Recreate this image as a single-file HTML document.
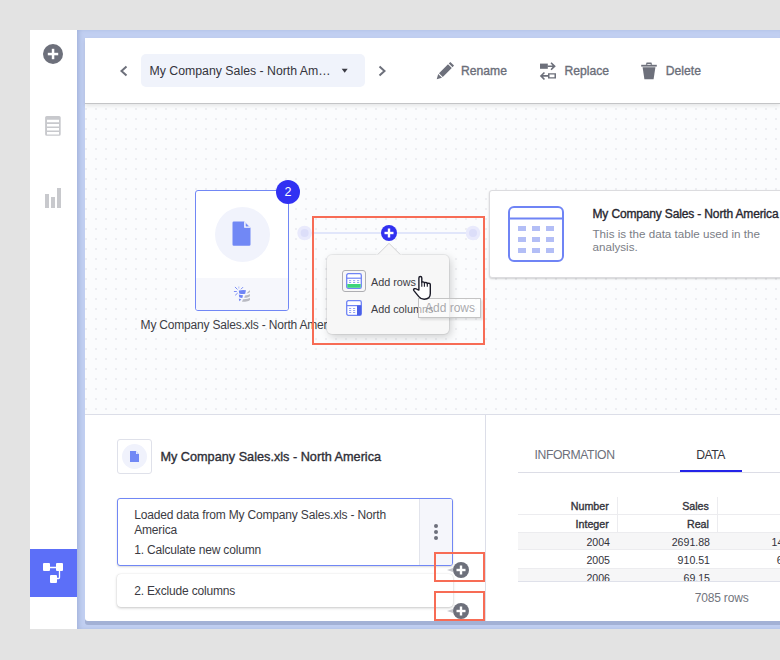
<!DOCTYPE html>
<html><head><meta charset="utf-8">
<style>
*{box-sizing:border-box;margin:0;padding:0}
html,body{width:780px;height:660px;overflow:hidden;background:#e3e3e3;font-family:"Liberation Sans",sans-serif;position:relative}
.a{position:absolute}
.t{position:absolute;white-space:nowrap;line-height:1}
#side{left:30px;top:30px;width:47px;height:599px;background:#fff}
#frame{left:77px;top:30px;width:703px;height:599px;background:#c1cff1;box-shadow:inset 3px 0 4px -1px rgba(80,100,160,.25)}
#card{left:85px;top:38px;width:695px;height:583px;background:#fff;border-radius:3px 0 0 3px;box-shadow:0 4px 0 #a3b1d5}
#header{left:85px;top:38px;width:695px;height:66px;background:#fff;border-bottom:1px solid #c3c4c6;box-shadow:0 2px 4px rgba(0,0,0,.09)}
#canvas{left:85px;top:104px;width:695px;height:310px}
#hline{left:85px;top:414px;width:695px;height:1px;background:#dcdee8}
#vline{left:485px;top:415px;width:1px;height:206px;background:#dcdee8}
.hdr{font-size:12.15px;color:#6b6e79;-webkit-text-stroke:0.35px #6b6e79}
.med{-webkit-text-stroke:0.35px currentColor}
</style></head><body>
<div class="a" id="side"></div>
<div class="a" id="frame"></div>
<div class="a" id="card"></div>
<svg class="a" id="canvas" width="695" height="310">
  <defs><pattern id="dots" x="0" y="4" width="10" height="10" patternUnits="userSpaceOnUse"><rect x="0" y="0" width="2" height="2" fill="#edeef2"/></pattern></defs>
  <rect width="695" height="310" fill="#fbfcfd"/>
  <rect width="695" height="310" fill="url(#dots)"/>
</svg>
<div class="a" id="header"></div>
<div class="a" id="hline"></div>
<div class="a" id="vline"></div>

<!-- sidebar icons -->
<svg class="a" style="left:30px;top:30px" width="47" height="200">
  <circle cx="23" cy="24" r="10" fill="#6d707b"/>
  <rect x="17.8" y="22.8" width="10.4" height="2.5" fill="#fff"/>
  <rect x="21.8" y="18.8" width="2.5" height="10.4" fill="#fff"/>
  <g fill="#c8c9cd">
   <path d="M16.7,86 h12.4 a1.6,1.6 0 0 1 1.6,1.6 v16.6 a1.6,1.6 0 0 1 -1.6,1.6 h-12.4 a1.6,1.6 0 0 1 -1.6,-1.6 v-16.6 a1.6,1.6 0 0 1 1.6,-1.6z M17,89.8 v2.4 h12 v-2.4z M17,94 v2.4 h12 v-2.4z M17,98 v2.4 h12 v-2.4z M17,102 v2.4 h12 v-2.4z" fill-rule="evenodd"/>
   <rect x="15" y="164" width="4" height="14"/>
   <rect x="21" y="167" width="4" height="11"/>
   <rect x="27" y="158" width="4" height="20"/>
  </g>
</svg>
<div class="a" style="left:30px;top:549px;width:47px;height:48px;background:#5c6ff8"></div>
<svg class="a" style="left:30px;top:549px" width="47" height="48">
  <g fill="#fff">
   <rect x="13" y="14" width="7" height="8" rx="1"/>
   <rect x="26" y="14" width="7" height="8" rx="1"/>
   <rect x="20" y="26" width="7" height="8" rx="1"/>
  </g>
  <path d="M20,18.5 H26 M29.5,22 V28.5 Q29.5,29.5 28.5,29.5 H27" stroke="#fff" stroke-width="1.3" fill="none"/>
</svg>

<!-- header -->
<svg class="a" style="left:115px;top:60px" width="20" height="20">
  <path d="M11.5,6.5 L6.5,11 L11.5,15.5" stroke="#6d707b" stroke-width="2" fill="none"/>
</svg>
<div class="a" style="left:141px;top:54px;width:224px;height:33px;background:#f0f3fb;border-radius:5px"></div>
<div class="t" style="left:149.5px;top:64.7px;font-size:12.3px;color:#34343c">My Company Sales - North Am…</div>
<svg class="a" style="left:338px;top:64px" width="14" height="14"><path d="M3.7,4.8 H9.7 L6.7,8.7z" fill="#3b3b44"/></svg>
<svg class="a" style="left:372px;top:60px" width="20" height="20">
  <path d="M7.5,6.5 L12.5,11 L7.5,15.5" stroke="#6d707b" stroke-width="2" fill="none"/>
</svg>

<svg class="a" style="left:436px;top:62px" width="18" height="18" viewBox="0 0 18 18">
  <path d="M0.7,17.2 L2.2,12 L6,15.7z M3,11.2 L12,2.2 L15.8,6 L6.8,15z M12.8,1.4 L14.3,0 L18,3.6 L16.6,5.2z" fill="#6d707b"/>
</svg>
<div class="t hdr" style="left:461px;top:64.6px">Rename</div>

<svg class="a" style="left:539px;top:62px" width="18" height="18" viewBox="0 0 18 18">
  <g fill="#6d707b">
   <rect x="1" y="1.6" width="7.8" height="5.2"/>
   <path d="M8.5,3.4 H13.5 L11.5,1.2 L12.6,0.2 L16.8,4.2 L12.6,8.2 L11.5,7.2 L13.5,5 H8.5z"/>
   <path d="M9,11.2 H17 V16.6 H9z M10.5,12.6 V15.2 H15.5 V12.6z" fill-rule="evenodd"/>
   <path d="M9,13.1 H4 L6,10.9 L4.9,9.9 L0.8,13.9 L4.9,17.9 L6,16.9 L4,14.7 H9z"/>
  </g>
</svg>
<div class="t hdr" style="left:564.5px;top:64.6px">Replace</div>

<svg class="a" style="left:640px;top:62px" width="18" height="18" viewBox="0 0 18 18">
  <g fill="#6d707b">
   <path d="M1.2,2.8 H16.8 V4.6 H1.2z"/>
   <path d="M5.8,2.8 L6.6,0.6 H11.4 L12.2,2.8 H10.8 L10.4,1.9 H7.6 L7.2,2.8z"/>
   <path d="M2.6,5.2 H15.4 L13.6,17.2 H4.4z"/>
  </g>
</svg>
<div class="t hdr" style="left:665.8px;top:64.6px">Delete</div>


<!-- canvas content -->
<div class="a" style="left:195px;top:190px;width:94px;height:121px;border:1px solid #7187f5;border-radius:3px;background:#fff;overflow:hidden">
  <div class="a" style="left:0;top:87px;width:92px;height:33px;background:#f6f7fc"></div>
</div>
<div class="a" style="left:214.5px;top:206.5px;width:55px;height:55px;border-radius:50%;background:#f1f3fc"></div>
<svg class="a" style="left:232px;top:221px" width="19" height="25" viewBox="0 0 19 25">
  <path d="M1.6,0.5 H12.2 L18.5,6.8 V23.4 A1.3,1.3 0 0 1 17.2,24.7 H1.8 A1.3,1.3 0 0 1 0.5,23.4 V1.8 A1.3,1.3 0 0 1 1.8,0.5z" fill="#7188f5"/>
  <path d="M12.2,0.5 V6.8 H18.5z" fill="#fff"/>
  <path d="M13.6,2 L17,5.4 H13.6z" fill="#7188f5"/>
</svg>
<svg class="a" style="left:228px;top:280px" width="28" height="26" viewBox="0 0 28 26">
  <g fill="#b9bac2">
    <path d="M18.4,13.6 L21.6,10.2 Q22.1,10.8 22,12 Q21.2,13.3 18.4,13.6z"/>
    <path d="M16.2,17.8 L17,15.4 Q20.5,15.3 21.8,14 L22,16 Q21,17.7 16.2,17.8z"/>
    <path d="M14,21.8 L15,19.2 Q20.5,19.3 21.9,17.8 L22,19.8 Q21,21.8 14,21.8z"/>
  </g>
  <g fill="#6f84f5">
    <path d="M10.8,10.6 Q14.5,9.4 18,10.2 L17.2,13.8 Q14,14.3 11.2,13.4z"/>
    <path d="M10.8,14.6 Q13,15.2 15,15.2 L14.3,17.9 Q12.5,17.7 11.2,17.2z"/>
    <path d="M10.8,18.4 L13.3,19.6 L11.4,21.2z"/>
  </g>
  <g stroke="#7b8ef5" stroke-width="1" stroke-linecap="round" fill="none">
    <path d="M7.2,7.2 L9.2,9.2 M6.3,11.5 H8.4 M7.5,15 L9.4,13.3 M13.2,9 L14.8,7.4"/>
  </g>
  <path d="M10.8,6.5 V8.5" stroke="#bcc6f7" stroke-width="1.2"/>
</svg>
<div class="a" style="left:276px;top:180px;width:24px;height:24px;border-radius:50%;background:#3131f2"></div>
<div class="t" style="left:276px;top:186px;width:24px;text-align:center;font-size:12.5px;color:#fff">2</div>
<div class="t" style="left:140.6px;top:319.3px;font-size:12px;letter-spacing:-0.2px;color:#3d3d45">My Company Sales.xls - North America</div>

<svg class="a" style="left:290px;top:215px" width="200" height="40">
  <line x1="14" y1="18" x2="183" y2="18" stroke="#e1e6fa" stroke-width="2"/>
  <circle cx="14.6" cy="18" r="7.3" fill="#e9eafc"/>
  <circle cx="14.6" cy="18" r="4" fill="#dcdef9"/>
  <circle cx="183" cy="18" r="7.3" fill="#e9eafc"/>
  <circle cx="183" cy="18" r="4" fill="#dcdef9"/>
  <circle cx="99" cy="18" r="8" fill="#3131f0"/>
  <rect x="94.5" y="16.8" width="9" height="2.4" fill="#fff"/>
  <rect x="97.8" y="13.5" width="2.4" height="9" fill="#fff"/>
</svg>

<!-- data table card -->
<div class="a" style="left:489px;top:190px;width:300px;height:88px;background:#fff;border:1px solid #dcdcdf;border-radius:3px;box-shadow:0 1px 2px rgba(0,0,0,.18)"></div>
<svg class="a" style="left:508px;top:206px" width="56" height="56" viewBox="0 0 56 56">
  <rect x="1" y="1" width="54" height="54" rx="5" fill="none" stroke="#6f84f5" stroke-width="2"/>
  <line x1="1" y1="12.5" x2="55" y2="12.5" stroke="#6f84f5" stroke-width="2"/>
  <g fill="#b3bef6">
   <rect x="10" y="20" width="8" height="5"/><rect x="24" y="20" width="8" height="5"/><rect x="38" y="20" width="8" height="5"/>
   <rect x="10" y="31" width="8" height="5"/><rect x="24" y="31" width="8" height="5"/><rect x="38" y="31" width="8" height="5"/>
   <rect x="10" y="42" width="8" height="5"/><rect x="24" y="42" width="8" height="5"/><rect x="38" y="42" width="8" height="5"/>
  </g>
</svg>
<div class="t med" style="left:592.5px;top:207.6px;font-size:12px;letter-spacing:-0.15px;color:#26262e">My Company Sales - North America</div>
<div class="t" style="left:592.5px;top:227.7px;font-size:11.63px;color:#7a7d86">This is the data table used in the</div>
<div class="t" style="left:592.5px;top:241.4px;font-size:11.63px;color:#7a7d86">analysis.</div>

<!-- popup -->
<div class="a" style="left:327px;top:255px;width:122px;height:79px;background:#f7f7f7;border-radius:5px;box-shadow:0 0 0 1px rgba(0,0,0,.06),2px 3px 8px rgba(0,0,0,.18)"></div>
<svg class="a" style="left:376px;top:242px" width="26" height="15">
  <path d="M1.5,12.8 L13,1.3 L24.5,12.8" fill="#f7f7f7" stroke="#d2d2d4" stroke-width="1"/>
  <rect x="0" y="12.6" width="26" height="2.4" fill="#f7f7f7"/>
</svg>
<div class="a" style="left:342px;top:270px;width:24px;height:22px;border:1.3px solid #aeaeb2;border-radius:3px"></div>
<svg class="a" style="left:346px;top:273px" width="16" height="16" viewBox="0 0 16 16">
  <rect x="0.7" y="0.7" width="14.6" height="14.6" rx="1.6" fill="#fff" stroke="#6f84f5" stroke-width="1.3"/>
  <line x1="0.7" y1="5.2" x2="15.3" y2="5.2" stroke="#6f84f5" stroke-width="1.2"/>
  <path d="M1.3,11 H14.7 V13.8 Q14.7,14.7 13.8,14.7 H2.2 Q1.3,14.7 1.3,13.8z" fill="#3dd47a"/>
  <g fill="#8d9cf3"><rect x="3" y="7.2" width="2.2" height="0.9"/><rect x="7" y="7.2" width="2.2" height="0.9"/><rect x="11" y="7.2" width="2.2" height="0.9"/>
  <rect x="3" y="9" width="2.2" height="0.9"/><rect x="7" y="9" width="2.2" height="0.9"/><rect x="11" y="9" width="2.2" height="0.9"/></g>
</svg>
<svg class="a" style="left:346px;top:300px" width="16" height="16" viewBox="0 0 16 16">
  <rect x="0.7" y="0.7" width="14.6" height="14.6" rx="1.6" fill="#fff" stroke="#6f84f5" stroke-width="1.3"/>
  <line x1="0.7" y1="5.6" x2="15.3" y2="5.6" stroke="#6f84f5" stroke-width="1.2"/>
  <path d="M11,5.6 H15.3 V13.8 Q15.3,15.3 13.8,15.3 H11z" fill="#4a5fe6"/>
  <g fill="#8d9cf3"><rect x="3" y="8" width="2.2" height="0.9"/><rect x="7" y="8" width="2.2" height="0.9"/>
  <rect x="3" y="10" width="2.2" height="0.9"/><rect x="7" y="10" width="2.2" height="0.9"/>
  <rect x="3" y="12" width="2.2" height="0.9"/><rect x="7" y="12" width="2.2" height="0.9"/></g>
</svg>
<div class="t" style="left:371px;top:276.7px;font-size:10.8px;color:#3d3d45">Add rows</div>
<div class="t" style="left:371px;top:303.6px;font-size:10.8px;color:#3d3d45">Add columns</div>

<!-- tooltip -->
<div class="a" style="left:418px;top:298px;width:63px;height:20px;background:rgba(255,255,255,.55);border:1px solid #c4c4c4;box-shadow:2px 2px 2px rgba(0,0,0,.10)"></div>
<div class="t" style="left:425px;top:301.5px;font-size:12px;color:rgba(140,140,145,.75)">Add rows</div>

<!-- cursor -->
<svg class="a" style="left:408px;top:272px" width="28" height="30" viewBox="0 0 28 30">
  <path d="M10.9,18 V6 A1.45,1.45 0 0 1 13.8,6 V10.6 Q13.8,9.9 15.1,9.9 Q16.4,9.9 16.4,11 Q16.5,10.5 17.9,10.5 Q19.3,10.5 19.3,11.7 Q19.4,11.2 20.8,11.2 Q22.3,11.2 22.3,12.5 V21.5 Q22.3,27 16.2,27.2 Q12.8,27.2 10.8,24.6 L5.9,18.6 Q5,17.2 6.4,16.7 Q7.9,16.3 9.1,17.3 Z" fill="#fff" stroke="#1b1b28" stroke-width="1.4" stroke-linejoin="round"/>
  <path d="M13.8,10.6 V14.8 M16.4,11 V14.8 M19.3,11.7 V14.8" stroke="#1b1b28" stroke-width="1.1"/>
</svg>
<!-- red highlight -->
<div class="a" style="left:312px;top:216px;width:173px;height:129px;border:2px solid #f76c55"></div>

<!-- bottom left panel -->
<div class="a" style="left:117px;top:439px;width:35px;height:35px;border:1px solid #dfe1ea;border-radius:3px;background:#fff"></div>
<div class="a" style="left:122px;top:444px;width:25px;height:25px;border-radius:50%;background:#f0f2fc"></div>
<svg class="a" style="left:130px;top:451px" width="9" height="11" viewBox="0 0 9 11">
  <path d="M0,0 H6 L9,3 V11 H0z" fill="#7188f5"/>
  <path d="M6,0 V3 H9z" fill="#fff"/>
  <path d="M6.6,1.2 L8,2.6 H6.6z" fill="#7188f5"/>
</svg>
<div class="t med" style="left:160.4px;top:451px;font-size:12.7px;color:#2e2e36">My Company Sales.xls - North America</div>

<div class="a" style="left:117px;top:498px;width:336px;height:68px;border:1px solid #7187f5;border-radius:3px;background:#fff;box-shadow:0 1px 2px rgba(0,0,0,.15);overflow:hidden">
  <div class="a" style="left:301px;top:0;width:34px;height:66px;background:#f5f6fb;border-left:1px solid #e2e4ec"></div>
</div>
<svg class="a" style="left:431px;top:522px" width="10" height="20">
  <circle cx="5" cy="4" r="2" fill="#6d707b"/><circle cx="5" cy="10" r="2" fill="#6d707b"/><circle cx="5" cy="16" r="2" fill="#6d707b"/>
</svg>
<div class="t" style="left:134.2px;top:508.5px;font-size:12px;letter-spacing:-0.17px;color:#3b3b43">Loaded data from My Company Sales.xls - North</div>
<div class="t" style="left:134.2px;top:524px;font-size:12px;letter-spacing:-0.17px;color:#3b3b43">America</div>
<div class="t" style="left:134.2px;top:543.5px;font-size:12px;letter-spacing:-0.17px;color:#3b3b43">1. Calculate new column</div>

<div class="a" style="left:117px;top:574px;width:336px;height:33px;border-radius:4px;background:#fff;box-shadow:0 1px 3px rgba(0,0,0,.22),0 0 1px rgba(0,0,0,.14)"></div>
<div class="t" style="left:134.2px;top:584.6px;font-size:12px;letter-spacing:-0.17px;color:#3b3b43">2. Exclude columns</div>

<svg class="a" style="left:444px;top:560px" width="30" height="62">
  <path d="M3,10 L9,8 V12z" fill="#c5c6cc"/>
  <circle cx="17" cy="10" r="8" fill="#6d707b"/>
  <rect x="12.5" y="8.8" width="9" height="2.4" fill="#fff"/>
  <rect x="15.8" y="5.5" width="2.4" height="9" fill="#fff"/>
  <path d="M3,51 L9,49 V53z" fill="#c5c6cc"/>
  <circle cx="17" cy="51" r="8" fill="#6d707b"/>
  <rect x="12.5" y="49.8" width="9" height="2.4" fill="#fff"/>
  <rect x="15.8" y="46.5" width="2.4" height="9" fill="#fff"/>
</svg>
<div class="a" style="left:434px;top:552px;width:51px;height:30px;border:2px solid #f76c55"></div>
<div class="a" style="left:434px;top:591px;width:51px;height:30px;border:2px solid #f76c55"></div>

<!-- right panel -->
<div class="t" style="left:534.6px;top:448.7px;font-size:12.2px;letter-spacing:-0.4px;color:#6d707b">INFORMATION</div>
<div class="t" style="left:696.3px;top:448.7px;font-size:12.2px;letter-spacing:-0.5px;color:#35353d">DATA</div>
<div class="a" style="left:518px;top:472px;width:262px;height:1px;background:#dcdde6"></div>
<div class="a" style="left:680px;top:470px;width:62px;height:2px;background:#2424e8"></div>

<div class="a" style="left:518px;top:514px;width:262px;height:1px;background:#ececef"></div>
<div class="a" style="left:518px;top:532px;width:262px;height:18px;background:#f6f6f7;border-top:1px solid #ececef;border-bottom:1px solid #ececef"></div>
<div class="a" style="left:518px;top:568px;width:262px;height:13px;background:#f6f6f7;border-top:1px solid #ececef"></div>
<div class="a" style="left:518px;top:581px;width:262px;height:1px;background:#dfe1ea"></div>
<div class="a" style="left:617px;top:497px;width:1px;height:35px;background:#ececef"></div>
<div class="a" style="left:717px;top:497px;width:1px;height:35px;background:#ececef"></div>
<div style="position:absolute;left:518px;top:497px;width:262px;height:84px;overflow:hidden">
 <div class="t med" style="right:171.2px;top:3.94px;font-size:10.7px;color:#33333b">Number</div>
 <div class="t med" style="right:171.2px;top:21.84px;font-size:10.7px;color:#33333b">Integer</div>
 <div class="t" style="right:170px;top:39.8px;font-size:10.6px;color:#33333b">2004</div>
 <div class="t" style="right:170px;top:57.8px;font-size:10.6px;color:#33333b">2005</div>
 <div class="t" style="right:170px;top:75.8px;font-size:10.6px;color:#33333b">2006</div>
 <div class="t med" style="right:71.1px;top:3.94px;font-size:10.7px;color:#33333b">Sales</div>
 <div class="t med" style="right:71.1px;top:21.84px;font-size:10.7px;color:#33333b">Real</div>
 <div class="t" style="right:70px;top:39.8px;font-size:10.6px;color:#33333b">2691.88</div>
 <div class="t" style="right:70px;top:57.8px;font-size:10.6px;color:#33333b">910.51</div>
 <div class="t" style="right:70px;top:75.8px;font-size:10.6px;color:#33333b">69.15</div>
 <div class="t" style="left:253.5px;top:39.8px;font-size:10.6px;color:#33333b">14</div>
 <div class="t" style="left:258.8px;top:57.8px;font-size:10.6px;color:#33333b">6</div>
</div>
<div class="t" style="left:694.7px;top:591.5px;font-size:12px;letter-spacing:-0.17px;color:#72757e">7085 rows</div>

</body></html>
